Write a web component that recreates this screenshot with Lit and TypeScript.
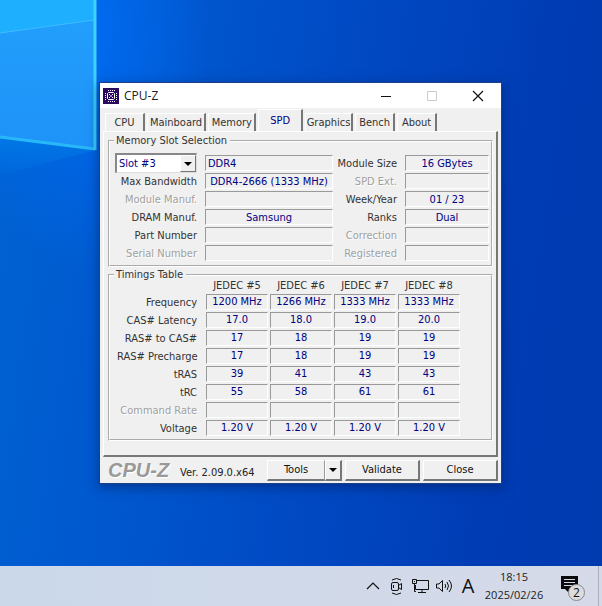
import { LitElement, html, css, svg } from "lit";
import { customElement, property } from "lit/decorators.js";
import { classMap } from "lit/directives/class-map.js";

const TABS = [
  { name: "CPU", size: "small" },
  { name: "Mainboard", size: "large" },
  { name: "Memory", size: "medium" },
  { name: "SPD", size: "active" },
  { name: "Graphics", size: "medium" },
  { name: "Bench", size: "small" },
  { name: "About", size: "small" },
];

type Field = { label: string; value: string; off?: boolean };

const MODULE_ROWS: [Field, Field][] = [
  [{ label: "Max Bandwidth", value: "DDR4-2666 (1333 MHz)" }, { label: "SPD Ext.", value: "", off: true }],
  [{ label: "Module Manuf.", value: "", off: true }, { label: "Week/Year", value: "01 / 23" }],
  [{ label: "DRAM Manuf.", value: "Samsung" }, { label: "Ranks", value: "Dual" }],
  [{ label: "Part Number", value: "" }, { label: "Correction", value: "", off: true }],
  [{ label: "Serial Number", value: "", off: true }, { label: "Registered", value: "", off: true }],
];

const PROFILES = ["JEDEC #5", "JEDEC #6", "JEDEC #7", "JEDEC #8"];

const TIMINGS: { label: string; values: string[]; off?: boolean }[] = [
  { label: "Frequency", values: ["1200 MHz", "1266 MHz", "1333 MHz", "1333 MHz"] },
  { label: "CAS# Latency", values: ["17.0", "18.0", "19.0", "20.0"] },
  { label: "RAS# to CAS#", values: ["17", "18", "19", "19"] },
  { label: "RAS# Precharge", values: ["17", "18", "19", "19"] },
  { label: "tRAS", values: ["39", "41", "43", "43"] },
  { label: "tRC", values: ["55", "58", "61", "61"] },
  { label: "Command Rate", values: ["", "", "", ""], off: true },
  { label: "Voltage", values: ["1.20 V", "1.20 V", "1.20 V", "1.20 V"] },
];

@customElement("cpuz-window")
export class CpuzWindow extends LitElement {
  static styles = css`
    :host {
      display: block;
      background: #f0f0f0;
      color: #333;
      font: 11px/14px "DejaVu Sans Condensed", "Noto Sans", sans-serif;
      box-shadow: 0 0 0 1px #1c3f86, 0 3px 10px 2px #00206080;
    }
    * { box-sizing: border-box; }
    button, input, select { font: inherit; border-radius: 0; margin: 0; }
    .titlebar { display: flex; align-items: center; height: 25px; padding-left: 3px; background: #fff; }
    .app-icon { width: 16px; height: 16px; margin-right: 5px; }
    .title { flex: 1; margin: 0; color: #222; font: 12px/16px "Open Sans", "Noto Sans", sans-serif; }
    .control { display: flex; width: 46px; height: 25px; padding: 0; border: 0; background: none; color: #111; align-items: center; justify-content: center; }
    .control:disabled { color: #ccc; }
    .tabs { display: flex; align-items: flex-end; height: 23px; padding: 0 62px 0 5px; }
    .tab {
      flex: 40 1 0; height: 18px; padding: 0; margin-right: 2px; background: #f0f0f0; color: #333;
      border: 1px solid #fff; border-right: 2px solid #777; border-bottom: 0; white-space: nowrap;
    }
    .tab.large { flex-grow: 61; }
    .tab.medium { flex-grow: 49; }
    .tab.active { flex-grow: 45; height: 22px; color: #000080; }
    .page {
      display: flex; flex-direction: column; gap: 1px; margin: 0 3px; padding: 2px 3px 14px 4px;
      border: 1px solid #fff; border-right: 2px solid #777; border-bottom: 2px solid #777; 
    }
    fieldset { margin: 0; min-width: 0; padding: 0 2px 1px 5px; border: 2px groove #fff; }
    legend { padding: 0 3px 0 2px; margin-left: -1px; line-height: 14px; }
    .module { display: grid; grid-template-columns: 82px minmax(0, 128fr) 56px minmax(0, 84fr); grid-auto-rows: 18px; gap: 0 8px; align-items: center; padding: 6px 0 2px; }
    .caption { justify-self: end; white-space: nowrap; padding-top: 2px; }
    .off { color: #a0a0a0; text-shadow: 1px 1px #fff; }
    .field {
      width: 100%; height: 16px; padding: 0 2px; outline: 0; text-align: center; background: #f0f0f0; color: #000080;
      border: 1px solid #999; border-right-color: #fff; border-bottom-color: #fff; 
    }
    .field.start { text-align: left; }
    .combo { position: relative; height: 20px; align-self: center; }
    .select {
      appearance: none; display: block; width: 100%; height: 20px; padding: 0 0 0 2px; background: #fff; color: #000080;
      border: 2px solid #888; border-right: 1px solid #ddd; border-bottom: 1px solid #ddd;
    }
    .arrow {
      position: absolute; top: 2px; right: 1px; display: flex; align-items: center; justify-content: center;
      width: 16px; height: 17px; background: #f0f0f0; border: 1px solid #fff; border-right-color: #777; border-bottom-color: #777; pointer-events: none;
    }
    .timings { table-layout: fixed; width: calc(100% - 27px); margin-top: -4px; border-collapse: separate; border-spacing: 2px; }
    .timings col.names { width: 87px; }
    .timings th { padding: 0; font-weight: 400; white-space: nowrap; height: 16px; line-height: 14px; }
    .timings thead th { height: 12px; line-height: 12px; }
    .timings tbody th { text-align: right; padding: 2px 7px 0 0; line-height: 14px; }
    .timings td { padding: 0; height: 16px; text-align: center; color: #000080; line-height: 14px; border: 1px solid #999; border-right-color: #fff; border-bottom-color: #fff; white-space: nowrap; }
    .footer { display: flex; align-items: center; gap: 3px; height: 26px; padding: 0 3px 0 8px; }
    .logo { margin: 0; font: italic bold 20px/22px "Liberation Sans", Arial, sans-serif; color: #999; text-shadow: 1px 1px #fff; }
    .version { flex: 1; padding: 6px 0 0 8px; color: #222; white-space: nowrap; }
    .button {
      width: 75px; height: 21px; padding: 0; background: #f0f0f0; color: #111;
      border: 1px solid #fff; border-right: 2px solid #777; border-bottom: 2px solid #777;
    }
    .split { display: flex; width: 75px; }
    .split .button:first-child { flex: 1; border-right: 1px solid #999; }
    .split .button:last-child { display: flex; align-items: center; justify-content: center; width: 17px; }
  `;

  private pair(item: Field, id: string) {
    return html`
      <label class=${classMap({ caption: true, off: !!item.off })} for=${id}>${item.label}</label>
      <input class="field" id=${id} readonly .value=${item.value} />
    `;
  }

  render() {
    return html`
      <header class="titlebar">
        <svg class="app-icon" viewBox="0 0 16 16" aria-hidden="true">
          <rect width="16" height="16" fill="#2a0a5e" />
          <g fill="none" stroke="#fff">
            <path d="M5 2.500h7M5 13.500h7" stroke-dasharray="1 1" />
            <path d="M2.500 5v7M13.500 5v7" stroke-dasharray="1 1" />
            <path d="M5.500 4.500h5l1 1v5l-1 1h-5l-1-1v-5z" />
            <path d="M6 6l1.500 1.500M10 6l-1.500 1.500M6 10l1.500-1.500M10 10L8.500 8.500" />
          </g>
        </svg>
        <h1 class="title">CPU-Z</h1>
        <button class="control" aria-label="Minimize">
          <svg width="12" height="12" aria-hidden="true"><path d="M1 6.500h10" stroke="currentColor" /></svg>
        </button>
        <button class="control" aria-label="Maximize" disabled>
          <svg width="12" height="12" aria-hidden="true"><path d="M1.500 1.500h9v9h-9z" fill="none" stroke="currentColor" /></svg>
        </button>
        <button class="control" aria-label="Close window">
          <svg width="12" height="12" aria-hidden="true"><path d="M1 1l10 10M11 1L1 11" stroke="currentColor" stroke-width="1.200" /></svg>
        </button>
      </header>

      <div class="tabs" role="tablist">
        ${TABS.map(
          (tab) => html`<button class="tab ${tab.size}" role="tab" aria-selected=${tab.size === "active"}>${tab.name}</button>`
        )}
      </div>

      <div class="page" role="tabpanel" aria-label="SPD">
        <fieldset>
          <legend>Memory Slot Selection</legend>
          <div class="module">
            <div class="combo">
              <select class="select" aria-label="Memory slot">
                <option>Slot #3</option>
              </select>
              <span class="arrow">
                <svg width="8" height="4" aria-hidden="true"><path d="M0 0h8L4 4z" /></svg>
              </span>
            </div>
            <input class="field start" aria-label="Memory type" readonly .value=${"DDR4"} />
            ${this.pair({ label: "Module Size", value: "16 GBytes" }, "size")}
            ${MODULE_ROWS.map(
              ([left, right], i) => html`${this.pair(left, `left-${i}`)}${this.pair(right, `right-${i}`)}`
            )}
          </div>
        </fieldset>

        <fieldset>
          <legend>Timings Table</legend>
          <table class="timings">
            <colgroup>
              <col class="names" />
              ${PROFILES.map(() => html`<col />`)}
            </colgroup>
            <thead>
              <tr>
                <th></th>
                ${PROFILES.map((name) => html`<th scope="col">${name}</th>`)}
              </tr>
            </thead>
            <tbody>
              ${TIMINGS.map(
                (row) => html`
                  <tr>
                    <th scope="row" class=${classMap({ off: !!row.off })}>${row.label}</th>
                    ${row.values.map((value) => html`<td>${value}</td>`)}
                  </tr>
                `
              )}
            </tbody>
          </table>
        </fieldset>
      </div>

      <footer class="footer">
        <p class="logo">CPU-Z</p>
        <span class="version">Ver. 2.09.0.x64</span>
        <div class="split">
          <button class="button">Tools</button>
          <button class="button" aria-label="More tools">
            <svg width="8" height="4" aria-hidden="true"><path d="M0 0h8L4 4z" /></svg>
          </button>
        </div>
        <button class="button">Validate</button>
        <button class="button">Close</button>
      </footer>
    `;
  }
}

@customElement("tray-icon")
export class TrayIcon extends LitElement {
  static styles = css`
    :host { display: inline-flex; }
    .icon { display: block; width: 20px; height: 20px; fill: none; stroke: #111; }
  `;

  @property() name = "";

  private shapes() {
    switch (this.name) {
      case "chevron":
        return svg`<path d="M5 13l6-6 6 6" stroke-width="1.200" />`;
      case "camera":
        return svg`
          <rect x="5.500" y="6.500" width="7" height="8" rx="1.500" />
          <path d="M12.500 9.500l3-2v6l-3-2M6 4q4.500-3 9 0M6 17q4.500 3 9 0M7.500 9v3" />`;
      case "network":
        return svg`
          <path d="M7 4.500h11.500v9H5.500V9M12 13.500v3M8 16.500h8" />
          <path d="M2.500 3.500h4v4h-4zM4.500 7.500v8H6" /><path d="M4 5.500h1" />`;
      default:
        return svg`
          <path d="M2.500 8v4h2.500l3.500 3.500v-11L5 8z" />
          <path d="M11 8q1.500 2 0 4M13 6q3 4 0 8M15 4q5 6 0 12" />`;
    }
  }

  render() {
    return html`<svg class="icon" viewBox="0 0 20 20" aria-hidden="true">${this.shapes()}</svg>`;
  }
}

@customElement("app-root")
export class AppRoot extends LitElement {
  static styles = css`
    :host {
      position: relative; display: flex; flex-direction: column; justify-content: space-between; min-height: 100vh; overflow: hidden;
      background:
        radial-gradient(ellipse 130px 240px at 80px 30px, #006cf4 0%, #0066e800 100%),
        linear-gradient(98deg, #0063d2 0%, #0058cf 25%, #004ac4 52%, #003cb4 82%, #003aaf 100%);
      font: 11px/18px "Open Sans", "Noto Sans", sans-serif;
    }
    * { box-sizing: border-box; }
    .wallpaper { position: absolute; top: 0; left: 0; width: 100px; height: 190px; }
    .desktop { position: relative; padding: 83px 101px 82px 100px; }
    .taskbar {
      position: relative; display: flex; align-items: center; justify-content: flex-end; height: 40px;
      background: linear-gradient(90deg, #cad8ea, #d6dae8); color: #222;
    }
    .tray { display: flex; align-items: center; gap: 4px; }
    .item { display: flex; justify-content: center; width: 20px; padding: 0; border: 0; background: none; }
    .ime { font: 20px/24px "Open Sans", "Noto Sans", sans-serif; color: #111; }
    .clock { width: 72px; text-align: center; margin-right: 7px; }
    .clock time { display: block; }
    .notices { position: relative; width: 28px; height: 28px; padding: 0; border: 0; background: none; margin-right: 13px; }
    .badge {
      position: absolute; right: 0; bottom: -1px; width: 17px; height: 17px; border: 1px solid #888; border-radius: 50%;
      background: #dcdcdc; color: #111; font: 12px/15px "Open Sans", "Noto Sans", sans-serif;
    }
    .peek { width: 4px; align-self: stretch; padding: 0; border: 0; border-left: 1px solid #a8b0c0; background: none; }
  `;

  render() {
    return html`
      <svg class="wallpaper" viewBox="0 0 100 190" aria-hidden="true">
        <defs>
          <linearGradient id="pane" x1="0" y1="0" x2="0" y2="1">
            <stop offset="0" stop-color="#22a0fc" />
            <stop offset="1" stop-color="#1e92f8" />
          </linearGradient>
          <linearGradient id="beam" x1="0" y1="0" x2="0" y2="1">
            <stop offset="0" stop-color="#0078e6" />
            <stop offset="1" stop-color="#006ade" stop-opacity="0.6" />
          </linearGradient>
        </defs>
        <path d="M0 138L96 150 0 175z" fill="url(#beam)" />
        <path d="M0 0h96v150L0 138z" fill="url(#pane)" />
        <path d="M0 0h94v20L0 33z" fill="#1eb0ff" />
        <path d="M0 33l94-13" stroke="#3fbcff" fill="none" />
        <path d="M0 137l95 12" stroke="#28b8f8" stroke-width="3" fill="none" />
        <path d="M95 0v150" stroke="#3ad4fc" stroke-width="3" fill="none" />
      </svg>
      <main class="desktop">
        <cpuz-window></cpuz-window>
      </main>
      <nav class="taskbar" aria-label="Taskbar">
        <div class="tray">
          <button class="item" aria-label="Show hidden icons"><tray-icon name="chevron"></tray-icon></button>
          <button class="item" aria-label="Camera"><tray-icon name="camera"></tray-icon></button>
          <button class="item" aria-label="Network"><tray-icon name="network"></tray-icon></button>
          <button class="item" aria-label="Volume"><tray-icon name="volume"></tray-icon></button>
          <button class="item ime">A</button>
        </div>
        <div class="clock"><time>18:15</time><time>2025/02/26</time></div>
        <button class="notices" aria-label="2 notifications">
          <svg width="28" height="28" aria-hidden="true">
            <path d="M4 4h17v13h-9v4l-4-4H4z" fill="#0a0a0a" />
            <path d="M7 7.500h11M7 10.500h11M7 13.500h8" stroke="#d5dae8" />
          </svg>
          <span class="badge">2</span>
        </button>
        <button class="peek" aria-label="Show desktop"></button>
      </nav>
    `;
  }
}
